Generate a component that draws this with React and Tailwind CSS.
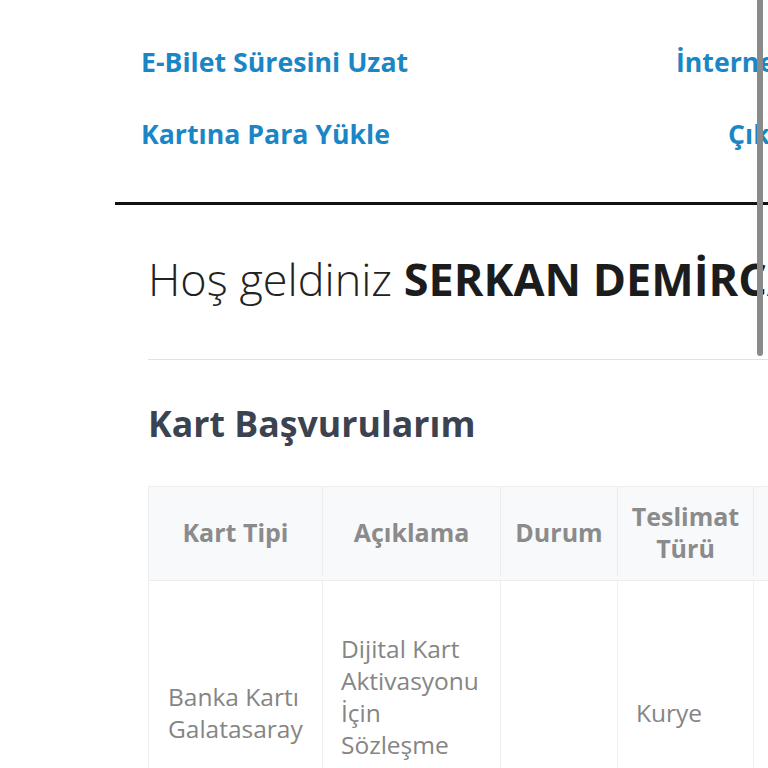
import React from "react";

export default function App() {
  return (
    <div
      className="relative w-[768px] h-[768px] overflow-hidden bg-white"
      style={{ fontFamily: '"Open Sans", "Noto Sans", sans-serif' }}
    >
      <div className="w-[1100px] pl-[115px]">
        {/* top links */}
        <div className="pl-[26px] pt-[44px] h-[202px]">
          <div className="grid grid-cols-[535px_auto] gap-y-[36px] text-[26.7px] leading-[36px] font-bold text-[#1b86c6]">
            <div>E-Bilet Süresini Uzat</div>
            <div>İnternet Şubesi</div>
            <div>Kartına Para Yükle</div>
            <div className="pl-[52px]">Çıkış</div>
          </div>
        </div>
        <div className="h-[3px] bg-[#111]" />

        <div className="pl-[33px]">
          <div className="pt-[44px] pb-[50px] text-[45px] leading-[60px] text-[#222] font-light whitespace-nowrap border-b border-[#e2e2e2]">
            Hoş geldiniz <span className="font-bold text-[#1c1c1c]">SERKAN DEMİRCAN</span>
          </div>

          <h2 className="pt-[43px] text-[35.7px] leading-[40px] font-bold text-[#3b4250]">
            Kart Başvurularım
          </h2>

          <div className="mt-[43px] border border-[#efefef]">
            <div className="grid grid-cols-[174px_178px_117px_136px_200px] bg-[#f8f9fa] h-[94px] pb-[4px] text-[25px] leading-[32px] font-bold text-[#8b8b8b] text-center border-b border-[#ececec]">
              <div className="flex items-center justify-center border-r border-[#ececec]">Kart Tipi</div>
              <div className="flex items-center justify-center border-r border-[#ececec]">Açıklama</div>
              <div className="flex items-center justify-center border-r border-[#ececec]">Durum</div>
              <div className="flex items-center justify-center border-r border-[#ececec]">Teslimat<br />Türü</div>
              <div className="flex items-center justify-center">Tarih</div>
            </div>
            <div className="grid grid-cols-[174px_178px_117px_136px_200px] h-[264px] text-[24.5px] leading-[32px] text-[#858585]">
              <div className="flex items-center px-[19px] border-r border-[#efefef]">Banka Kartı Galatasaray</div>
              <div className="flex items-center px-[18px] border-r border-[#efefef]">
                Dijital Kart Aktivasyonu İçin Sözleşme Reddedildi
              </div>
              <div className="border-r border-[#efefef]" />
              <div className="flex items-center px-[18px] border-r border-[#efefef]">Kurye</div>
              <div />
            </div>
          </div>
        </div>
      </div>

      {/* scrollbar overlay */}
      <div className="absolute left-[757px] top-0 w-[6px] h-[356px] rounded-b-full bg-[#8a8a8a]" />
    </div>
  );
}
